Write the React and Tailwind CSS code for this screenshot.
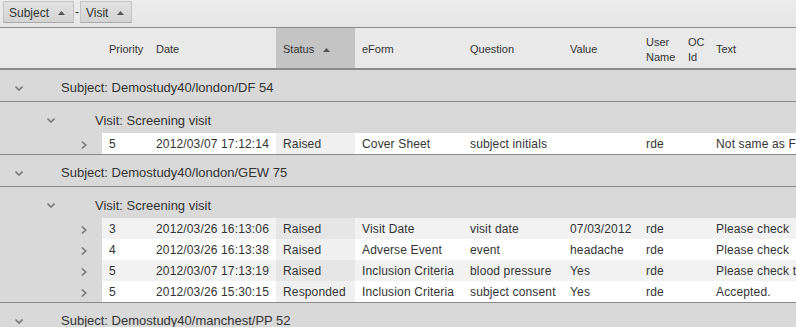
import React from "react";

const cols = [
  { key: "priority", label: "Priority", w: 47 },
  { key: "date", label: "Date", w: 127 },
  { key: "status", label: "Status", w: 79, sorted: true },
  { key: "eform", label: "eForm", w: 108 },
  { key: "question", label: "Question", w: 100 },
  { key: "value", label: "Value", w: 76 },
  { key: "user", label: "User Name", w: 42 },
  { key: "oc", label: "OC Id", w: 28 },
  { key: "text", label: "Text", w: 100 },
];

const groups = [
  {
    subject: "Demostudy40/london/DF 54",
    visits: [
      {
        name: "Screening visit",
        rows: [
          ["5", "2012/03/07 17:12:14", "Raised", "Cover Sheet", "subject initials", "", "rde", "", "Not same as Form"],
        ],
      },
    ],
  },
  {
    subject: "Demostudy40/london/GEW 75",
    visits: [
      {
        name: "Screening visit",
        rows: [
          ["3", "2012/03/26 16:13:06", "Raised", "Visit Date", "visit date", "07/03/2012", "rde", "", "Please check"],
          ["4", "2012/03/26 16:13:38", "Raised", "Adverse Event", "event", "headache", "rde", "", "Please check"],
          ["5", "2012/03/07 17:13:19", "Raised", "Inclusion Criteria", "blood pressure", "Yes", "rde", "", "Please check the"],
          ["5", "2012/03/26 15:30:15", "Responded", "Inclusion Criteria", "subject consent", "Yes", "rde", "", "Accepted."],
        ],
      },
    ],
  },
  { subject: "Demostudy40/manchest/PP 52", visits: [] },
];

const ChevDown = () => (
  <svg width="8" height="5" viewBox="0 0 8 5" className="block">
    <path d="M0.5 0.5 L4 4 L7.5 0.5" fill="none" stroke="#7a7a7a" strokeWidth="1.6" />
  </svg>
);
const ChevRight = () => (
  <svg width="6" height="8" viewBox="0 0 6 8" className="block">
    <path d="M0.8 0.5 L4.8 4 L0.8 7.5" fill="none" stroke="#7a7a7a" strokeWidth="1.6" />
  </svg>
);
const Tri = () => (
  <svg width="7" height="4" viewBox="0 0 7 4" className="block">
    <path d="M0 4 L3.5 0 L7 4 Z" fill="#555" />
  </svg>
);

function ToolButton({ label, w }) {
  return (
    <div
      className="h-[22px] flex items-center pl-[5px] pt-[1px] border border-[#c4c4c4] border-b-[#a9a9a9] bg-gradient-to-b from-[#e2e2e2] to-[#d3d3d3] text-[12px] text-[#333]"
      style={{ width: w }}
    >
      <span>{label}</span>
      <span className="ml-[9px]">
        <Tri />
      </span>
    </div>
  );
}

export default function App() {
  let rowIndex = 0;
  return (
    <div
      className="w-[796px] h-[327px] overflow-hidden bg-[#d9d9d9] text-[#333]"
      style={{ fontFamily: '"Liberation Sans", Arial, sans-serif' }}
    >
      {/* toolbar */}
      <div className="h-[28px] border-b border-[#8a8a8a] bg-gradient-to-b from-[#ececec] to-[#e6e6e6] flex items-start pt-[1px] pl-[3px]">
        <ToolButton label="Subject" w={71} />
        <span className="text-[12px] mx-[1px] leading-[22px]">-</span>
        <ToolButton label="Visit" w={52} />
      </div>

      {/* header */}
      <div className="h-[42px] border-b-2 border-[#8a8a8a] bg-[#e9e9e9] flex text-[11px] text-[#333]">
        <div className="w-[102px] shrink-0" />
        {cols.map((c) => (
          <div
            key={c.key}
            className={`shrink-0 flex items-center pl-[7px] pt-[3px] leading-[15px] ${c.sorted ? "bg-[#c4c4c4]" : ""}`}
            style={{ width: c.w }}
          >
            {c.key === "user" ? (
              <span>
                User
                <br />
                Name
              </span>
            ) : c.key === "oc" ? (
              <span>
                OC
                <br />
                Id
              </span>
            ) : (
              <span>{c.label}</span>
            )}
            {c.sorted && (
              <span className="ml-[9px]">
                <Tri />
              </span>
            )}
          </div>
        ))}
      </div>

      {groups.map((g) => (
        <div key={g.subject} className="border-b border-[#8a8a8a]">
          <div className="h-[32px] flex items-center pt-[5px] border-b border-[#8a8a8a]">
            <div className="w-[61px] shrink-0 pl-[15px]">
              <ChevDown />
            </div>
            <span className="text-[13px] whitespace-nowrap">Subject: {g.subject}</span>
          </div>
          {g.visits.map((v) => (
            <div key={v.name}>
              <div className="h-[31px] flex items-center pt-[6px]">
                <div className="w-[95px] shrink-0 pl-[47px]">
                  <ChevDown />
                </div>
                <span className="text-[13px] whitespace-nowrap">Visit: {v.name}</span>
              </div>
              {v.rows.map((r, i) => {
                const alt = rowIndex++ % 2 === 1;
                return (
                  <div key={i} className="h-[21px] flex items-center text-[12px] tracking-[0.15px]">
                    <div className="w-[102px] shrink-0 pl-[81px] pt-[2px] h-full flex items-center">
                      <ChevRight />
                    </div>
                    {cols.map((c, ci) => (
                      <div
                        key={c.key}
                        className={`shrink-0 h-full flex items-center pl-[7px] pt-[1px] whitespace-nowrap overflow-hidden ${
                          c.sorted
                            ? alt
                              ? "bg-[#e6e6e6]"
                              : "bg-[#f0f0f0]"
                            : alt
                            ? "bg-[#f2f2f2]"
                            : "bg-white"
                        } ${ci === cols.length - 1 ? "grow" : ""}`}
                        style={{ width: c.w }}
                      >
                        {r[ci]}
                      </div>
                    ))}
                  </div>
                );
              })}
            </div>
          ))}
        </div>
      ))}
    </div>
  );
}
